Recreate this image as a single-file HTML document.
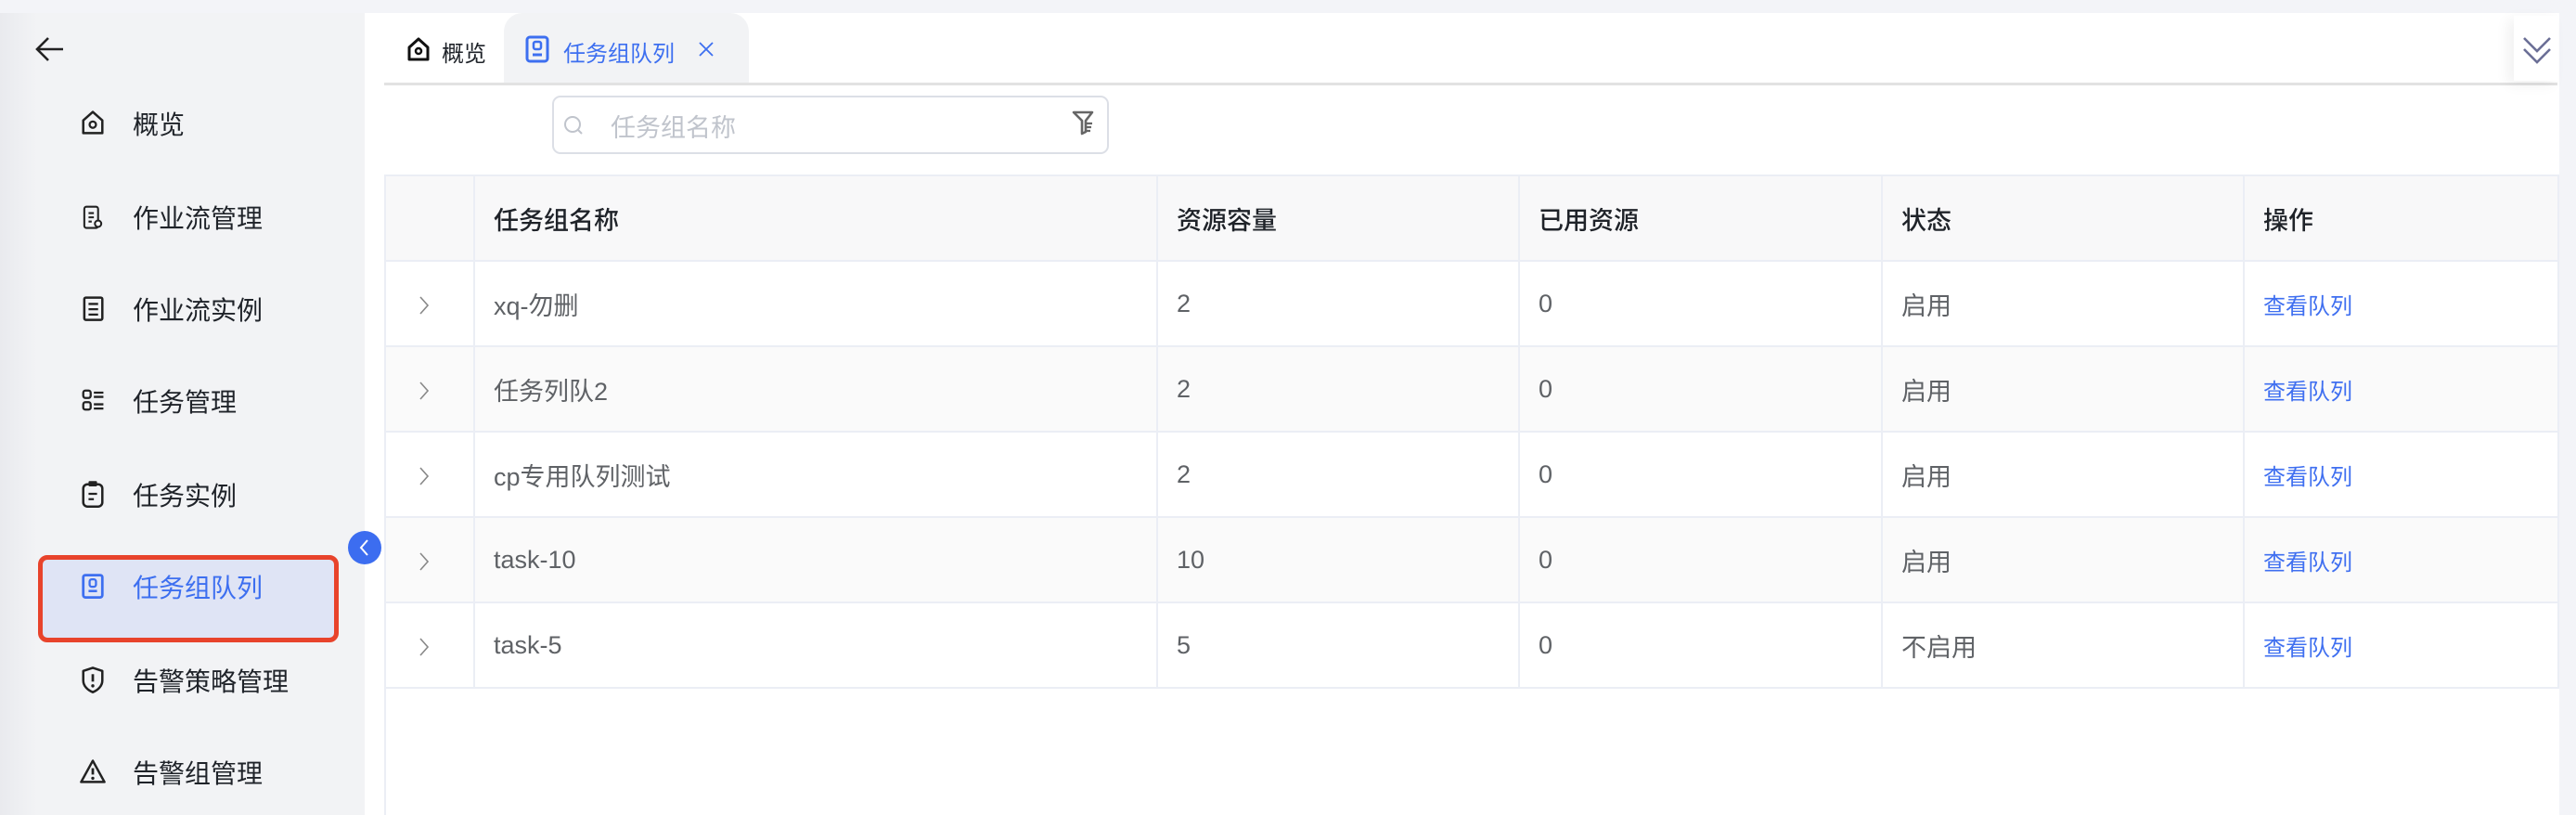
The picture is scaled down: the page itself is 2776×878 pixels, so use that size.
<!DOCTYPE html>
<html><head><meta charset="utf-8"><style>
*{margin:0;padding:0;box-sizing:border-box}
body{width:2776px;height:878px;overflow:hidden;background:#f3f4f8;font-family:"Liberation Sans","Noto Sans CJK SC",sans-serif;position:relative}
.side{position:absolute;left:0;top:14px;width:393px;height:864px;background:linear-gradient(90deg,#e9eaee 0,#f2f3f5 40px,#f2f3f5 100%)}
.mi{position:absolute;left:0;height:40px;display:flex;align-items:center;font-size:28px;color:#1f2329}
.mi svg{position:absolute;left:84px;top:3px}
.mi span{position:absolute;left:143px;white-space:nowrap}
.sel{position:absolute;left:41px;top:584px;width:324px;height:94px;border:5px solid #e8432b;border-radius:10px;background:#dfe4f5}
.main{position:absolute;left:393px;top:14px;width:2365px;height:864px;background:#fff}
.tabline{position:absolute;left:414px;top:89px;width:2342px;height:3px;background:#e2e2e2}
.t{position:absolute;font-size:24px;white-space:nowrap}
table{position:absolute;left:414px;top:188px;width:2342px;border-collapse:collapse;table-layout:fixed}
td,th{border:2px solid #ebeef5;height:92px;text-align:left;padding-left:20px;font-size:27px;font-weight:normal;color:#5f6266}
th{background:#f8f8f9;color:#1f2329;font-weight:500;font-size:27px}
tr.g td{background:#fafafa}
td a{color:#3f6ff0;font-size:24px;text-decoration:none}
td.chev{padding-left:34px}
td.chev svg{display:block;margin-top:4px}
</style></head><body>
<div class="side">
<svg style="position:absolute;left:38px;top:25px" width="32" height="28" viewBox="0 0 32 28"><path d="M30 14H3M14 2L2 14l12 12" fill="none" stroke="#222" stroke-width="2.6"/></svg>
<div class="sel"></div>
<div class="mi" style="top:99px"><svg width="32" height="32" viewBox="0 0 28 28"><path d="M5 12L14 4l9 8v12H5z" fill="none" stroke="#222" stroke-width="2.2" stroke-linejoin="round"/><circle cx="14" cy="16" r="3" fill="none" stroke="#222" stroke-width="2"/></svg><span>概览</span></div>
<div class="mi" style="top:200px"><svg width="32" height="32" viewBox="0 0 28 28"><rect x="6" y="5" width="13" height="20" rx="2" fill="none" stroke="#222" stroke-width="1.8"/><path d="M10 11h5M10 15h5M10 19h3" stroke="#222" stroke-width="1.8"/><circle cx="19" cy="21" r="3" fill="#fff" stroke="#222" stroke-width="1.8"/></svg><span>作业流管理</span></div>
<div class="mi" style="top:299px"><svg width="32" height="32" viewBox="0 0 28 28"><rect x="6" y="4" width="17" height="21" rx="1.5" fill="none" stroke="#222" stroke-width="2.2"/><path d="M10 10h9M10 15h9M10 20h9" stroke="#222" stroke-width="2"/></svg><span>作业流实例</span></div>
<div class="mi" style="top:398px"><svg width="32" height="32" viewBox="0 0 28 28"><rect x="5" y="5" width="7" height="7" rx="2" fill="none" stroke="#222" stroke-width="2"/><rect x="5" y="16" width="7" height="7" rx="2" fill="none" stroke="#222" stroke-width="2"/><path d="M15 7h9M15 11h9M15 18h9M15 22h9" stroke="#222" stroke-width="2"/></svg><span>任务管理</span></div>
<div class="mi" style="top:499px"><svg width="32" height="32" viewBox="0 0 28 28"><rect x="5" y="5" width="18" height="21" rx="4" fill="none" stroke="#222" stroke-width="2.2"/><rect x="10" y="2" width="8" height="5" rx="1" fill="#222"/><path d="M10 14h8M10 19h5" stroke="#222" stroke-width="2"/></svg><span>任务实例</span></div>
<div class="mi" style="top:598px;color:#3d6ff0"><svg width="32" height="32" viewBox="0 0 28 28"><rect x="5" y="4" width="18" height="21" rx="2" fill="none" stroke="#3d6ff0" stroke-width="2.4"/><rect x="11" y="8" width="6" height="7" rx="2" fill="none" stroke="#3d6ff0" stroke-width="2"/><path d="M10 19h8" stroke="#3d6ff0" stroke-width="2.2"/></svg><span>任务组队列</span></div>
<div class="mi" style="top:699px"><svg width="32" height="32" viewBox="0 0 28 28"><path d="M14 3l9 3v9c0 5-4 9-9 11-5-2-9-6-9-11V6z" fill="none" stroke="#222" stroke-width="2.2" stroke-linejoin="round"/><path d="M14 9v7" stroke="#222" stroke-width="2.4"/><circle cx="14" cy="20" r="1.5" fill="#222"/></svg><span>告警策略管理</span></div>
<div class="mi" style="top:798px"><svg width="32" height="32" viewBox="0 0 28 28"><path d="M14 4L3 24h22z" fill="none" stroke="#222" stroke-width="2.2" stroke-linejoin="round"/><path d="M14 11v6" stroke="#222" stroke-width="2.4"/><circle cx="14" cy="20.5" r="1.5" fill="#222"/></svg><span>告警组管理</span></div>
</div>
<div class="main"></div>
<div style="position:absolute;left:375px;top:572px;width:36px;height:36px;border-radius:50%;background:#3c6df0"><svg width="36" height="36" viewBox="0 0 36 36"><path d="M21 10l-7 8 7 8" fill="none" stroke="#fff" stroke-width="2"/></svg></div>
<div style="position:absolute;left:543px;top:14px;width:264px;height:76px;background:#f2f3f5;border-radius:20px 20px 0 0"></div>
<svg style="position:absolute;left:437px;top:38px" width="28" height="30" viewBox="0 0 28 30"><path d="M4 13L14 4l10 9v13H4z" fill="none" stroke="#111" stroke-width="3" stroke-linejoin="round"/><circle cx="14" cy="17" r="3" fill="none" stroke="#111" stroke-width="2.5"/></svg>
<div class="t" style="left:476px;top:38px;color:#1f2329">概览</div>
<svg style="position:absolute;left:566px;top:38px" width="26" height="30" viewBox="0 0 26 30"><rect x="2" y="2" width="22" height="26" rx="3" fill="none" stroke="#3d6ff0" stroke-width="3"/><rect x="9" y="7" width="8" height="8" rx="2" fill="none" stroke="#3d6ff0" stroke-width="2.5"/><path d="M8 21h10" stroke="#3d6ff0" stroke-width="3"/></svg>
<div class="t" style="left:607px;top:38px;color:#3d6ff0">任务组队列</div>
<svg style="position:absolute;left:752px;top:44px" width="18" height="18" viewBox="0 0 18 18"><path d="M2 2l14 14M16 2L2 16" stroke="#3d6ff0" stroke-width="1.8"/></svg>
<div class="tabline"></div>
<div style="position:absolute;left:2709px;top:17px;width:48px;height:70px;background:#fff;box-shadow:-6px 4px 14px rgba(0,0,0,.06)"><svg style="position:absolute;left:8px;top:21px" width="34" height="34" viewBox="0 0 34 34"><path d="M3 3l14 14L31 3M3 15l14 14 14-14" fill="none" stroke="#6b6f96" stroke-width="2.6"/></svg></div>
<div style="position:absolute;left:595px;top:103px;width:600px;height:63px;border:2px solid #dcdfe6;border-radius:9px"></div>
<svg style="position:absolute;left:606px;top:123px" width="24" height="24" viewBox="0 0 24 24"><circle cx="11" cy="11" r="8" fill="none" stroke="#c0c4cc" stroke-width="2"/><path d="M17 17l4 4" stroke="#c0c4cc" stroke-width="2"/></svg>
<div class="t" style="left:658px;top:116px;color:#c0c4cc;font-size:27px">任务组名称</div>
<svg style="position:absolute;left:1154px;top:118px" width="26" height="30" viewBox="0 0 26 30"><path d="M3 3h20l-7 9v12l-4 2V12z" fill="none" stroke="#666" stroke-width="2.6" stroke-linejoin="round"/><path d="M17 15h6M17 19h5M17 23h4" stroke="#666" stroke-width="2.2"/></svg>
<table>
<colgroup><col style="width:96px"><col style="width:736px"><col style="width:390px"><col style="width:391px"><col style="width:390px"><col style="width:339px"></colgroup>
<tr><th></th><th>任务组名称</th><th>资源容量</th><th>已用资源</th><th>状态</th><th>操作</th></tr>
<tr><td class="chev"><svg width="14" height="24" viewBox="0 0 14 24"><path d="M3 3l8 9-8 9" fill="none" stroke="#888" stroke-width="1.6"/></svg></td><td>xq-勿删</td><td>2</td><td>0</td><td>启用</td><td><a>查看队列</a></td></tr>
<tr class="g"><td class="chev"><svg width="14" height="24" viewBox="0 0 14 24"><path d="M3 3l8 9-8 9" fill="none" stroke="#888" stroke-width="1.6"/></svg></td><td>任务列队2</td><td>2</td><td>0</td><td>启用</td><td><a>查看队列</a></td></tr>
<tr><td class="chev"><svg width="14" height="24" viewBox="0 0 14 24"><path d="M3 3l8 9-8 9" fill="none" stroke="#888" stroke-width="1.6"/></svg></td><td>cp专用队列测试</td><td>2</td><td>0</td><td>启用</td><td><a>查看队列</a></td></tr>
<tr class="g"><td class="chev"><svg width="14" height="24" viewBox="0 0 14 24"><path d="M3 3l8 9-8 9" fill="none" stroke="#888" stroke-width="1.6"/></svg></td><td>task-10</td><td>10</td><td>0</td><td>启用</td><td><a>查看队列</a></td></tr>
<tr><td class="chev"><svg width="14" height="24" viewBox="0 0 14 24"><path d="M3 3l8 9-8 9" fill="none" stroke="#888" stroke-width="1.6"/></svg></td><td>task-5</td><td>5</td><td>0</td><td>不启用</td><td><a>查看队列</a></td></tr>
</table>
<div style="position:absolute;left:414px;top:740px;width:2px;height:138px;background:#ebeef5"></div>
</body></html>
